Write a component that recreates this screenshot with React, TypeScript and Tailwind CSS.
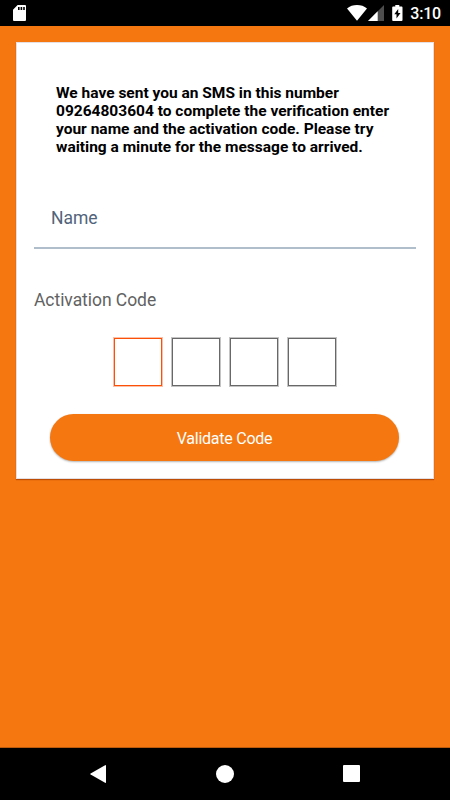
import React from 'react';

const messageLines = [
  'We have sent you an SMS in this number',
  '09264803604 to complete the verification enter',
  'your name and the activation code. Please try',
  'waiting a minute for the message to arrived.',
];

const codeBoxes = [0, 1, 2, 3];

const StatusBar: React.FC = () => {
  return (
    <header className="flex h-[26px] shrink-0 items-center bg-black pl-[13px] pr-[9px] text-white">
      <svg width="13" height="16" viewBox="0 0 13 16" fill="currentColor" aria-hidden="true">
        <path
          fillRule="evenodd"
          d="M4.6 0H12a1 1 0 0 1 1 1v14a1 1 0 0 1-1 1H1a1 1 0 0 1-1-1V4.8zM5 2v3h1.6V2zM7.6 2v3h1.6V2zM10.2 2v3h1.6V2z"
        />
      </svg>
      <div className="ml-auto flex items-center">
        <svg width="20" height="16" viewBox="0 0 20 16" fill="currentColor" aria-hidden="true">
          <path d="M0 3.4C2.8 1.1 6.2 0 10 0s7.2 1.1 10 3.4L10 15.7z" />
        </svg>
        <svg className="ml-px" width="16" height="16" viewBox="0 0 16 16" fill="currentColor" aria-hidden="true">
          <path d="M16 0v16H0z" opacity="0.3" />
          <path d="M9.7 6.3V16H0z" />
        </svg>
        <svg className="ml-2" width="11" height="16" viewBox="0 0 11 16" fill="currentColor" aria-hidden="true">
          <path
            fillRule="evenodd"
            d="M3.3 0h4v1.6H9.6a.9.9 0 0 1 .9.9v12.6a.9.9 0 0 1-.9.9H1.1a.9.9 0 0 1-.9-.9V2.5a.9.9 0 0 1 .9-.9h2.2zM6.2 4L2.3 9.2h2.2v4.3l4-5.5H6.2z"
          />
        </svg>
        <span className="ml-[7px] pt-0.5 text-base font-medium leading-6 tracking-[-0.2px]">3:10</span>
      </div>
    </header>
  );
};

const NavigationBar: React.FC = () => {
  return (
    <nav className="flex h-[52px] shrink-0 items-center justify-between bg-black px-[90px] text-white">
      <button aria-label="Back">
        <svg className="block" width="16" height="18" viewBox="0 0 16 18" fill="currentColor">
          <path d="M15.1.2q.9-.5.9.5v16.6q0 1-.9.5L.6 9.5q-.8-.5 0-1z" />
        </svg>
      </button>
      <button aria-label="Home" className="h-[18px] w-[18px] rounded-full bg-white" />
      <button aria-label="Recent apps" className="mb-px h-[17px] w-[17px] rounded-[1px] bg-white" />
    </nav>
  );
};

const App: React.FC = () => {
  return (
    <div className="flex h-[800px] w-[450px] flex-col overflow-hidden bg-[#f5770f] font-[Roboto,sans-serif]">
      <StatusBar />

      <main className="flex-1 border-b border-[#b95a0c] px-4 pt-4">
        <section className="flex h-[437px] flex-col border border-[#e3dfe3] bg-white px-[17px] shadow-[0_1px_1px_rgba(165,60,0,0.7)]">
          <p className="ml-[22px] mt-[41px] text-[15.5px] font-bold leading-[18px] text-black">
            {messageLines.map((line) => (
              <span key={line} className="block whitespace-nowrap">
                {line}
              </span>
            ))}
          </p>

          <input
            aria-label="Name"
            placeholder="Name"
            className="mt-[31px] h-[62px] w-full shrink-0 border-b-2 border-[#b0bdca] px-[17px] pt-0.5 text-[17.5px] text-[#51647b] outline-none placeholder:text-[#51647b]"
          />

          <label className="mt-[39px] text-[17.5px] leading-6 tracking-[-0.05px] text-[#626262]">Activation Code</label>

          <div className="mt-[26px] flex justify-center gap-[10px]">
            {codeBoxes.map((box) => (
              <input
                key={box}
                maxLength={1}
                aria-label={`Digit ${box + 1}`}
                className={`h-12 w-12 border outline-none ${
                  box === 0
                    ? 'border-[#fa5007] shadow-[0_0_0_1px_#fcc0a8]'
                    : 'border-[#686868] shadow-[0_0_0_1px_#c4c4c4]'
                }`}
              />
            ))}
          </div>

          <button className="ml-4 mr-[17px] mt-7 h-[47px] rounded-full bg-[#f5770f] pt-0.5 text-base tracking-[-0.25px] text-white shadow-[0_1px_2px_rgba(0,0,0,0.3)]">
            Validate Code
          </button>
        </section>
      </main>

      <NavigationBar />
    </div>
  );
};

export default App;
